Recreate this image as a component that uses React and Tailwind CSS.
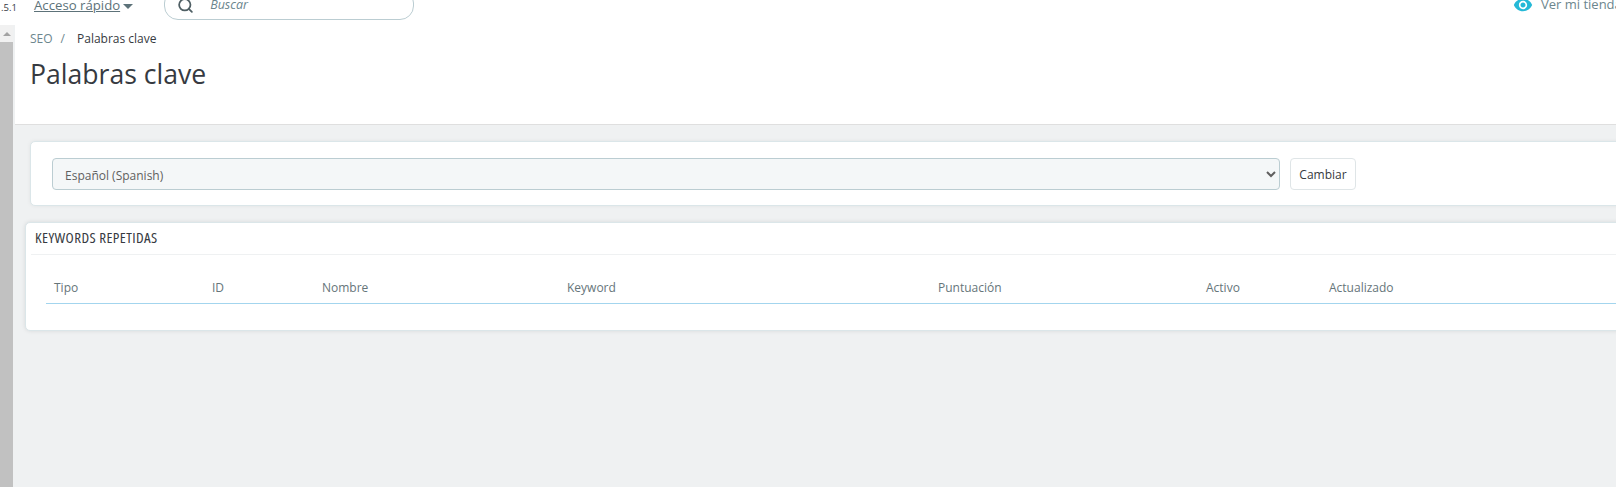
import { Search } from "lucide-react";

const columns = ["Tipo", "ID", "Nombre", "Keyword", "Puntuación", "Activo", "Actualizado"];

const TopBar = () => {
  return (
    <header className="flex h-[25px] shrink-0 overflow-hidden bg-white">
      <span className="mt-[1px] w-[34px] shrink-0 pl-[1px] text-[9.5px] leading-[14px] text-[#363a41]">
        .5.1
      </span>
      <a className="-mt-[5px] flex h-[22px] shrink-0 items-center text-[13.2px] text-[#5d7279]">
        <span className="underline">Acceso rápido</span>
        <span className="ml-[3px] mt-[1px] h-0 w-0 border-x-[5px] border-t-[5px] border-x-transparent border-t-[#5d7279]" />
      </a>
      <div className="-mt-[11px] ml-[31px] flex h-[31px] w-[250px] shrink-0 items-center rounded-[14px] border border-[#bbcdd2] bg-white pl-[12px] pt-[2px]">
        <Search size={17} strokeWidth={2.5} className="text-[#4f5f64]" />
        <span className="ml-[16px] text-[12.5px] italic text-[#6c868e]">Buscar</span>
      </div>
      <a className="-mt-[6px] ml-auto flex h-[22px] w-[103px] shrink-0 items-center text-[13px] whitespace-nowrap text-[#6c868e]">
        <svg viewBox="0 0 24 24" width="20" height="20" fill="#25b9d7" className="mr-[8px] shrink-0">
          <path d="M12 4.5C7 4.5 2.73 7.61 1 12c1.73 4.39 6 7.5 11 7.5s9.27-3.11 11-7.5c-1.73-4.39-6-7.5-11-7.5zM12 17c-2.76 0-5-2.24-5-5s2.24-5 5-5 5 2.24 5 5-2.24 5-5 5zm0-8c-1.66 0-3 1.34-3 3s1.34 3 3 3 3-1.34 3-3-1.34-3-3-3z" />
        </svg>
        Ver mi tienda
      </a>
    </header>
  );
};

const Scrollbar = () => {
  return (
    <div className="flex w-[13px] shrink-0 flex-col bg-[#f1f1f1]">
      <div className="flex h-[17px] shrink-0 items-center justify-center">
        <span className="h-0 w-0 border-x-[4px] border-b-[4px] border-x-transparent border-b-[#a3a3a3]" />
      </div>
      <div className="flex-1 bg-[#c1c1c1]" />
    </div>
  );
};

export default function App() {
  return (
    <div className="flex h-[487px] w-[1616px] flex-col overflow-hidden bg-[#eff1f2] font-['Open_Sans',sans-serif] text-[#363a41]">
      <TopBar />
      <div className="flex min-h-0 flex-1">
        <Scrollbar />
        <main className="min-w-0 flex-1 pl-[2px]">
          {/* Page head */}
          <div className="h-[100px] border-b border-[#dfdfdf] bg-white pl-[15px]">
            <div className="flex pt-[5px] text-[12px] leading-[18px]">
              <span className="text-[#6c868e]">SEO</span>
              <span className="ml-[8px] text-[#6c868e]">/</span>
              <span className="ml-[12px]">Palabras clave</span>
            </div>
            <h1 className="mt-[7px] text-[26.6px] leading-[38px] font-normal">Palabras clave</h1>
          </div>

          {/* Language selector */}
          <section className="ml-[15px] mr-[-30px] mt-[16px] flex h-[65px] items-start rounded-[5px] border border-[#dbe6e9] bg-white pl-[21px] pt-[16px] shadow-[0_0_4px_0_rgba(0,0,0,0.06)]">
            <select
              defaultValue="es"
              className="h-[32px] w-[1228px] rounded-[4px] border border-[#bbcdd2] bg-[#f4f7f8] pl-[8px] pt-[2px] text-[12px] text-[#5f5f5f]"
            >
              <option value="es">Español (Spanish)</option>
            </select>
            <button
              type="button"
              className="ml-[10px] h-[32px] w-[66px] rounded-[4px] border border-[#dfe5e7] bg-white pt-[1px] text-[12px]"
            >
              Cambiar
            </button>
          </section>

          {/* Repeated keywords */}
          <section className="ml-[10px] mr-[-30px] mt-[16px] h-[109px] rounded-[5px] border border-[#dbe6e9] bg-white shadow-[0_0_4px_0_rgba(0,0,0,0.1)]">
            <div className="ml-[5px] h-[32px] border-b border-[#eff1f2] pl-[4px] text-[15px] leading-[29px] tracking-[0.4px] text-[#363a41] [font-stretch:75%]">
              KEYWORDS REPETIDAS
            </div>
            <div className="ml-[20px] mt-[16px] grid h-[33px] grid-cols-[158px_110px_245px_371px_268px_123px_1fr] items-center border-b border-[#a3d5ee] pl-[8px] pt-[1px] text-[12px] text-[#66757a]">
              {columns.map((col) => (
                <span key={col}>{col}</span>
              ))}
            </div>
          </section>
        </main>
      </div>
    </div>
  );
}
